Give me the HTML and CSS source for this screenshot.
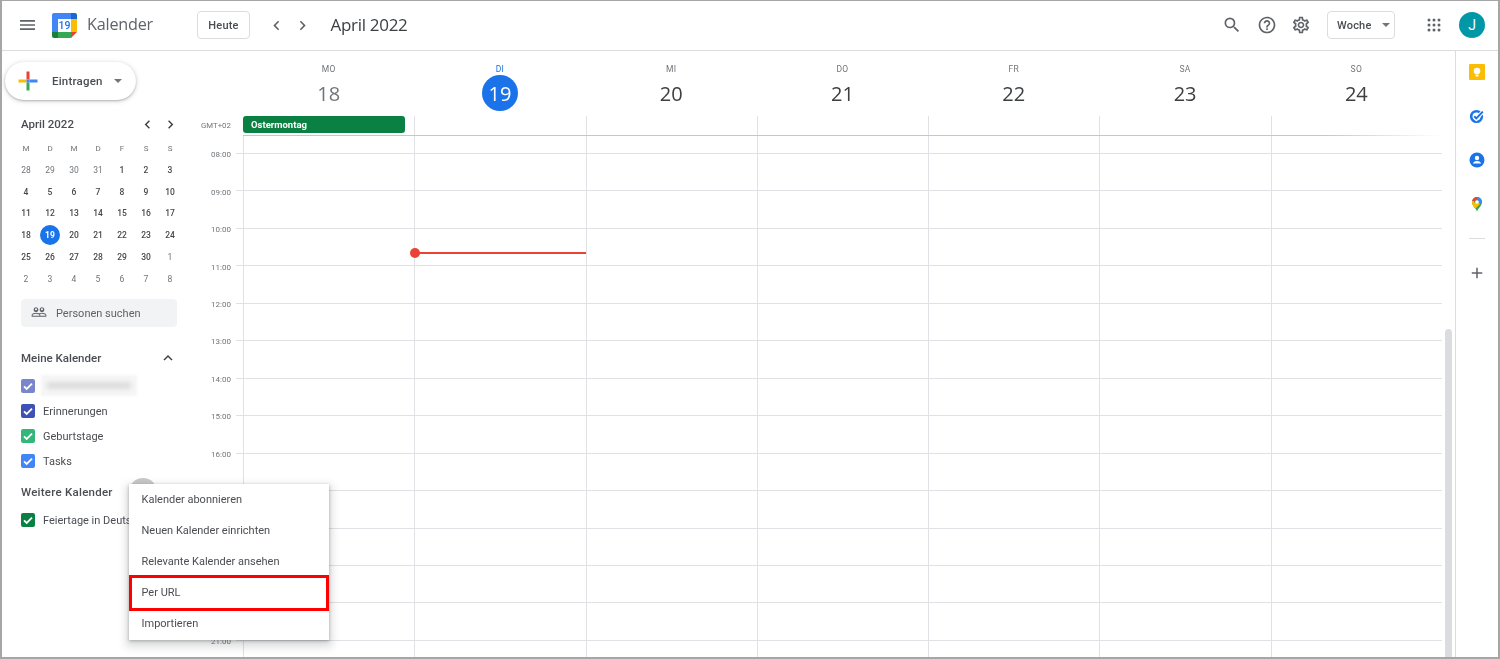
FILE: index.html
```html
<!DOCTYPE html>
<html lang="de">
<head>
<meta charset="utf-8">
<title>Kalender</title>
<link rel="stylesheet" href="styles.css">
</head>
<body>
<div class="frame">
  <header class="topbar">
    <button class="icon-btn menu-btn"><svg viewBox="3 6 18 12" width="15" height="10" preserveAspectRatio="none"><path d="M3 18h18v-2H3v2zm0-5h18v-2H3v2zm0-7v2h18V6H3z"/></svg></button>
    <svg class="logo" viewBox="0 0 25 25" width="25" height="25">
      <path fill="#4285f4" d="M2 0h17v6H6v13H0V2a2 2 0 0 1 2-2z"/>
      <path fill="#fbbc04" d="M19 6h6v13h-6z"/>
      <path fill="#34a853" d="M6 19h13v6H6z"/>
      <path fill="#ea4335" d="M19 19h6l-6 6z"/>
      <path fill="#1967d2" d="M19 0h4a2 2 0 0 1 2 2v4h-6z"/>
      <path fill="#188038" d="M0 19h6v6H2a2 2 0 0 1-2-2z"/>
      <rect x="6" y="6" width="13" height="13" fill="#fff"/>
      <text x="12.5" y="16.4" class="logo-num">19</text>
    </svg>
    <span class="brand">Kalender</span>
    <button class="outline-btn today-btn">Heute</button>
    <button class="icon-btn nav-first"><svg viewBox="0 0 24 24" width="19" height="19"><path d="M15.41 7.41 14 6l-6 6 6 6 1.41-1.41L10.83 12z"/></svg></button>
    <button class="icon-btn nav-next"><svg viewBox="0 0 24 24" width="19" height="19"><path d="M10 6 8.59 7.41 13.17 12l-4.58 4.59L10 18l6-6z"/></svg></button>
    <span class="period">April 2022</span>
    <span class="spacer"></span>
    <button class="icon-btn tool"><svg viewBox="0 0 24 24" width="20" height="20"><path d="M15.5 14h-.79l-.28-.27A6.471 6.471 0 0 0 16 9.5 6.5 6.5 0 1 0 9.5 16c1.61 0 3.09-.59 4.23-1.57l.27.28v.79l5 4.99L20.49 19l-4.99-5zm-6 0C7.01 14 5 11.99 5 9.5S7.01 5 9.5 5 14 7.01 14 9.5 11.99 14 9.5 14z"/></svg></button>
    <button class="icon-btn tool"><svg viewBox="0 0 24 24" width="20" height="20"><path d="M11 18h2v-2h-2v2zm1-16C6.48 2 2 6.48 2 12s4.48 10 10 10 10-4.48 10-10S17.52 2 12 2zm0 18c-4.41 0-8-3.59-8-8s3.59-8 8-8 8 3.59 8 8-3.59 8-8 8zm0-14c-2.21 0-4 1.79-4 4h2c0-1.1.9-2 2-2s2 .9 2 2c0 2-3 1.75-3 5h2c0-2.25 3-2.5 3-5 0-2.21-1.79-4-4-4z"/></svg></button>
    <button class="icon-btn tool"><svg viewBox="0 0 24 24" width="20" height="20"><path d="M19.43 12.98c.04-.32.07-.64.07-.98 0-.34-.03-.66-.07-.98l2.11-1.65c.19-.15.24-.42.12-.64l-2-3.46c-.09-.16-.26-.25-.44-.25-.06 0-.12.01-.17.03l-2.49 1c-.52-.4-1.08-.73-1.69-.98l-.38-2.65C14.46 2.18 14.25 2 14 2h-4c-.25 0-.46.18-.49.42l-.38 2.65c-.61.25-1.17.59-1.69.98l-2.49-1c-.06-.02-.12-.03-.18-.03-.17 0-.34.09-.43.25l-2 3.46c-.13.22-.07.49.12.64l2.11 1.65c-.04.32-.07.65-.07.98 0 .33.03.66.07.98l-2.11 1.65c-.19.15-.24.42-.12.64l2 3.46c.09.16.26.25.44.25.06 0 .12-.01.17-.03l2.49-1c.52.4 1.08.73 1.69.98l.38 2.65c.03.24.24.42.49.42h4c.25 0 .46-.18.49-.42l.38-2.65c.61-.25 1.17-.59 1.69-.98l2.49 1c.06.02.12.03.18.03.17 0 .34-.09.43-.25l2-3.46c.12-.22.07-.49-.12-.64l-2.11-1.65zm-1.98-1.71c.04.31.05.52.05.73 0 .21-.02.43-.05.73l-.14 1.13.89.7 1.08.84-.7 1.21-1.27-.51-1.04-.42-.9.68c-.43.32-.84.56-1.25.73l-1.06.43-.16 1.13-.2 1.35h-1.4l-.19-1.35-.16-1.13-1.06-.43c-.43-.18-.83-.41-1.23-.71l-.91-.7-1.06.43-1.27.51-.7-1.21 1.08-.84.89-.7-.14-1.13c-.03-.31-.05-.54-.05-.74s.02-.43.05-.73l.14-1.13-.89-.7-1.08-.84.7-1.21 1.27.51 1.04.42.9-.68c.43-.32.84-.56 1.25-.73l1.06-.43.16-1.13.2-1.35h1.39l.19 1.35.16 1.13 1.06.43c.43.18.83.41 1.23.71l.91.7 1.06-.43 1.27-.51.7 1.21-1.07.85-.89.7.14 1.13zM12 8c-2.21 0-4 1.79-4 4s1.79 4 4 4 4-1.79 4-4-1.79-4-4-4zm0 6c-1.1 0-2-.9-2-2s.9-2 2-2 2 .9 2 2-.9 2-2 2z"/></svg></button>
    <button class="outline-btn view-btn">Woche<i class="caret"></i></button>
    <button class="icon-btn apps-btn"><svg viewBox="0 0 14 14" width="14" height="14"><g><circle cx="2" cy="2" r="1.5"/><circle cx="7" cy="2" r="1.5"/><circle cx="12" cy="2" r="1.5"/><circle cx="2" cy="7" r="1.5"/><circle cx="7" cy="7" r="1.5"/><circle cx="12" cy="7" r="1.5"/><circle cx="2" cy="12" r="1.5"/><circle cx="7" cy="12" r="1.5"/><circle cx="12" cy="12" r="1.5"/></g></svg></button>
    <span class="avatar">J</span>
  </header>

  <div class="content">
    <aside class="sidebar">
      <button class="create-btn">
        <svg viewBox="0 0 20 20" width="20" height="20">
          <rect x="8.500" y="0.500" width="3" height="8" fill="#ea4335"/>
          <rect x="11.500" y="8.500" width="8" height="3" fill="#4285f4"/>
          <rect x="8.500" y="11.500" width="3" height="8" fill="#34a853"/>
          <rect x="0.500" y="8.500" width="8" height="3" fill="#fbbc04"/>
          <rect x="8.500" y="8.500" width="3" height="3" fill="#4285f4"/>
        </svg>
        <span class="create-label">Eintragen</span>
        <i class="caret"></i>
      </button>

      <div class="mini-head">
        <span class="mini-title">April 2022</span>
        <svg viewBox="0 0 24 24" width="17" height="17"><path d="M15.41 7.41 14 6l-6 6 6 6 1.41-1.41L10.83 12z"/></svg>
        <svg viewBox="0 0 24 24" width="17" height="17"><path d="M10 6 8.59 7.41 13.17 12l-4.58 4.59L10 18l6-6z"/></svg>
      </div>
      <div class="mini-grid">
        <span class="wd">M</span><span class="wd">D</span><span class="wd">M</span><span class="wd">D</span><span class="wd">F</span><span class="wd">S</span><span class="wd">S</span>
        <span class="off">28</span><span class="off">29</span><span class="off">30</span><span class="off">31</span><span>1</span><span>2</span><span>3</span>
        <span>4</span><span>5</span><span>6</span><span>7</span><span>8</span><span>9</span><span>10</span>
        <span>11</span><span>12</span><span>13</span><span>14</span><span>15</span><span>16</span><span>17</span>
        <span>18</span><span class="cur"><b>19</b></span><span>20</span><span>21</span><span>22</span><span>23</span><span>24</span>
        <span>25</span><span>26</span><span>27</span><span>28</span><span>29</span><span>30</span><span class="off">1</span>
        <span class="off">2</span><span class="off">3</span><span class="off">4</span><span class="off">5</span><span class="off">6</span><span class="off">7</span><span class="off">8</span>
      </div>

      <div class="people">
        <svg viewBox="0 0 24 24" width="16" height="16"><path d="M16.5 13c-1.2 0-3.07.34-4.500 1-1.430-.67-3.300-1-4.500-1C5.330 13 1 14.080 1 16.250V19h22v-2.750c0-2.170-4.330-3.250-6.500-3.250zm-4 4.500h-10v-1.250c0-.54 2.560-1.750 5-1.750s5 1.210 5 1.750v1.250zm9 0H14v-1.250c0-.46-.2-.86-.52-1.220.88-.3 1.960-.53 3.020-.53 2.440 0 5 1.210 5 1.750v1.250zM7.500 12c1.930 0 3.500-1.570 3.500-3.500S9.430 5 7.500 5 4 6.570 4 8.500 5.570 12 7.500 12zm0-5.500c.83 0 1.500.67 1.500 1.500s-.67 1.500-1.500 1.500S6 8.830 6 8s.67-1.500 1.500-1.500zm9 5.500c1.930 0 3.500-1.570 3.500-3.500S18.430 5 16.500 5 13 6.570 13 8.500s1.570 3.500 3.500 3.500zm0-5.500c.83 0 1.500.67 1.500 1.500s-.67 1.500-1.500 1.500S15 8.830 15 8s.67-1.500 1.500-1.500z"/></svg>
        <span>Personen suchen</span>
      </div>

      <div class="sec-head sec-mine">
        <span>Meine Kalender</span>
        <svg viewBox="0 0 24 24" width="18" height="18"><path d="M12 8l-6 6 1.410 1.410L12 10.830l4.590 4.580L18 14z"/></svg>
      </div>
      <ul class="cal-list">
        <li><span class="check c-lav"><svg viewBox="0 0 14 14"><path d="M3 7.300l2.700 2.700L11 4.700"/></svg></span><span class="blurred"><i></i></span></li>
        <li><span class="check c-ind"><svg viewBox="0 0 14 14"><path d="M3 7.300l2.700 2.700L11 4.700"/></svg></span>Erinnerungen</li>
        <li><span class="check c-grn"><svg viewBox="0 0 14 14"><path d="M3 7.300l2.700 2.700L11 4.700"/></svg></span>Geburtstage</li>
        <li><span class="check c-blu"><svg viewBox="0 0 14 14"><path d="M3 7.300l2.700 2.700L11 4.700"/></svg></span>Tasks</li>
      </ul>
      <div class="sec-head sec-more">
        <span>Weitere Kalender</span>
        <i class="hover-dot"></i>
      </div>
      <ul class="cal-list">
        <li class="nowrap"><span class="check c-bas"><svg viewBox="0 0 14 14"><path d="M3 7.300l2.700 2.700L11 4.700"/></svg></span>Feiertage in Deutschland</li>
      </ul>
    </aside>

    <main class="calendar">
      <div class="day-row">
        <div class="day"><span class="day-name">MO</span><span class="day-num past">18</span></div>
        <div class="day today"><span class="day-name">DI</span><span class="day-num">19</span></div>
        <div class="day"><span class="day-name">MI</span><span class="day-num">20</span></div>
        <div class="day"><span class="day-name">DO</span><span class="day-num">21</span></div>
        <div class="day"><span class="day-name">FR</span><span class="day-num">22</span></div>
        <div class="day"><span class="day-name">SA</span><span class="day-num">23</span></div>
        <div class="day"><span class="day-name">SO</span><span class="day-num">24</span></div>
      </div>
      <div class="allday">
        <span class="tz">GMT+02</span>
        <div class="allday-cols">
          <div class="allday-col"><span class="chip">Ostermontag</span></div>
          <div class="allday-col"></div><div class="allday-col"></div><div class="allday-col"></div><div class="allday-col"></div><div class="allday-col"></div><div class="allday-col"></div>
        </div>
      </div>
      <div class="grid">
        <div class="gutter">
          <span>08:00</span><span>09:00</span><span>10:00</span><span>11:00</span><span>12:00</span><span>13:00</span><span>14:00</span><span>15:00</span><span>16:00</span><span></span><span></span><span></span><span></span><span>21:00</span>
        </div>
        <div class="cols">
          <div class="col"></div>
          <div class="col"><div class="now"></div></div>
          <div class="col"></div><div class="col"></div><div class="col"></div><div class="col"></div><div class="col"></div>
        </div>
        <div class="scrollbar"></div>
      </div>
    </main>

    <aside class="addons">
      <svg viewBox="0 0 16 16" width="16" height="16" class="addon"><rect width="16" height="16" rx="1" fill="#fbbc04"/><circle cx="8" cy="7" r="3.300" fill="#fff"/><rect x="6.500" y="10.500" width="3" height="2" fill="#fff"/></svg>
      <svg viewBox="0 0 16 16" width="16" height="16" class="addon"><circle cx="7.500" cy="8.500" r="5.300" fill="none" stroke="#1a73e8" stroke-width="2.600"/><path d="M5 8.300l2.300 2.300L14 3.500" fill="none" stroke="#fff" stroke-width="4"/><path d="M5.200 8.300l2.100 2.100L13.800 3.600" fill="none" stroke="#1a73e8" stroke-width="2"/></svg>
      <svg viewBox="0 0 16 16" width="16" height="16" class="addon"><circle cx="8" cy="8" r="7.500" fill="#1a73e8"/><circle cx="8" cy="6" r="2.200" fill="#fff"/><path d="M3.800 11.500c.6-1.700 2.500-2.500 4.200-2.500s3.600.8 4.200 2.500z" fill="#fff"/></svg>
      <svg viewBox="0 0 16 16" width="16" height="16" class="addon">
        <clipPath id="pin"><path d="M8 15.500C7.300 12.500 3 10 3 6A5 5 0 0 1 13 6C13 10 8.700 12.500 8 15.500Z"/></clipPath>
        <g clip-path="url(#pin)">
          <rect x="2" y="0" width="12" height="16" fill="#34a853"/>
          <path d="M2 0h8L3 8H2z" fill="#ea4335"/>
          <path d="M10 0h4v6l-3 2-3-3z" fill="#4285f4"/>
          <path d="M3 8l5-3 3 3-5 5z" fill="#fbbc04"/>
          <path d="M2 5h3v5l-3 0z" fill="#fbbc04"/>
        </g>
        <circle cx="8" cy="6" r="1.800" fill="#fff"/>
      </svg>
      <i class="addon-sep"></i>
      <svg viewBox="0 0 24 24" width="18" height="18" class="addon-plus"><path d="M19 13h-6v6h-2v-6H5v-2h6V5h2v6h6v2z"/></svg>
    </aside>
  </div>

  <div class="popup">
    <div class="popup-item">Kalender abonnieren</div>
    <div class="popup-item">Neuen Kalender einrichten</div>
    <div class="popup-item">Relevante Kalender ansehen</div>
    <div class="popup-item">Per URL</div>
    <div class="popup-item">Importieren</div>
    <div class="highlight"></div>
  </div>
</div>
</body>
</html>
```

FILE: styles.css
```css
* { box-sizing: border-box; }
html, body { margin: 0; padding: 0; background: #fff; }
body { font-family: Roboto, "Liberation Sans", sans-serif; color: #3c4043; overflow: hidden; }
button { font: inherit; color: inherit; background: none; border: 0; padding: 0; }
ul { list-style: none; margin: 0; padding: 0; }
svg { display: block; fill: #5f6368; flex: none; }

.frame { position: relative; width: 1500px; height: 659px; border: solid #a6a6a6; border-width: 1px 2px 2px 2px; display: flex; flex-direction: column; overflow: hidden; filter: blur(.3px); }

/* top bar */
.topbar { height: 50px; flex: none; display: flex; align-items: center; padding-bottom: 1px; border-bottom: 1px solid #dadce0; }
.icon-btn { display: flex; align-items: center; justify-content: center; }
.menu-btn { margin-left: 18px; width: 15px; }
.menu-btn svg { fill: #5f6368; }
.logo { margin-left: 17px; }
.logo-num { font: 500 10.5px Roboto, sans-serif; fill: #1a73e8; text-anchor: middle; }
.brand { margin: 0 0 2px 10px; font-size: 16.200px; color: #5f6368; font-family: "Open Sans", Roboto, sans-serif; letter-spacing: -0.2px; }
.outline-btn { height: 28px; border: 1px solid #dadce0; border-radius: 4px; font-size: 11px; font-weight: 500; letter-spacing: .2px; color: #4a4d52; }
.today-btn { margin-left: 44px; width: 53px; }
.nav-first { margin-left: 17px; width: 19px; }
.nav-next { margin-left: 7px; width: 19px; }
.period { margin: 0 0 2px 18.500px; font-size: 17px; font-family: "Open Sans", Roboto, sans-serif; letter-spacing: -0.3px; color: #3c4043; }
.spacer { flex: 1; }
.tool { width: 20px; margin-right: 14.500px; }
.view-btn { width: 68px; margin-left: 1.500px; display: flex; align-items: center; padding-left: 9px; }
.caret { width: 0; height: 0; border: 4px solid transparent; border-top: 4.500px solid #70757a; border-bottom: 0; display: block; }
.view-btn .caret { margin-left: 10px; }
.apps-btn { margin-left: 32px; width: 14px; }
.avatar { margin-left: 18px; margin-right: 13px; width: 26px; height: 26px; border-radius: 50%; background: #0097a7; color: #fff; font-size: 14px; font-weight: 400; display: flex; align-items: center; justify-content: center; }

/* body */
.content { flex: 1; min-height: 0; display: flex; }
.sidebar { width: 195px; flex: none; }
.create-btn { margin: 11px 0 0 3px; width: 131px; height: 38px; border-radius: 19px; background: #fff; box-shadow: 0 1px 2px rgba(60,64,67,.3), 0 1px 4px 1px rgba(60,64,67,.15); display: flex; align-items: center; padding: 0 0 1px 12.500px; }
.create-label { margin-left: 14.500px; font-size: 11.500px; font-weight: 500; letter-spacing: .2px; color: #4a4d52; }
.create-btn .caret { margin-left: 11px; }

.mini-head { margin: 12px 0 0 19px; height: 24px; width: 158px; display: flex; align-items: center; }
.mini-head svg { fill: #3c4043; }
.mini-head svg + svg { margin-left: 6px; }
.mini-title { flex: 1; font-size: 11.500px; font-weight: 500; color: #4a4d52; }
.mini-grid { margin: 1px 0 0 12px; display: grid; grid-template-columns: repeat(7, 24px); grid-auto-rows: 21.830px; font-size: 8.500px; font-weight: 500; color: #45484c; }
.mini-grid span { display: flex; align-items: center; justify-content: center; }
.mini-grid .wd { color: #70757a; font-size: 8px; font-weight: 400; padding-top: 1px; }
.mini-grid .off { color: #70757a; font-weight: 400; }
.mini-grid .cur b { width: 20px; height: 20px; border-radius: 50%; background: #1a73e8; color: #fff; display: flex; align-items: center; justify-content: center; font-weight: 700; }

.people { margin: 9px 0 0 19px; width: 156px; height: 28px; border-radius: 4px; background: #f1f3f4; display: flex; align-items: center; padding: 1px 0 0 10px; font-size: 11px; color: #5f6368; }
.people svg { margin-top: -3px; }
.people span { margin-left: 9px; }

.sec-head { margin-left: 19px; height: 20px; display: flex; align-items: center; font-size: 11.500px; font-weight: 500; color: #4a4d52; }
.sec-mine { margin-top: 21px; width: 156px; justify-content: space-between; }
.sec-mine svg { fill: #3c4043; }
.sec-more { margin-top: 8.500px; width: 136px; justify-content: space-between; letter-spacing: .25px; }
.hover-dot { width: 28px; height: 28px; border-radius: 50%; background: #c8c9cb; flex: none; }
.cal-list { margin-top: 5.500px; }
.cal-list li { margin-left: 19px; height: 25px; display: flex; align-items: center; padding-top: 1px; font-size: 11px; color: #4a4d52; }
.cal-list .nowrap { white-space: nowrap; }
.check { width: 14px; height: 14px; border-radius: 2px; margin: -1px 8px 0 0; flex: none; }
.check svg { width: 14px; height: 14px; fill: none; stroke: #fff; stroke-width: 1.800; }
.c-lav { background: #7986cb; }
.c-ind { background: #3f51b5; }
.c-grn { background: #33b679; }
.c-blu { background: #4285f4; }
.c-bas { background: #0b8043; }
.blurred { width: 96px; height: 21px; margin: -1px 0 0 -2px; background: #f6f6f6; filter: blur(1px); display: flex; align-items: center; justify-content: center; }
.blurred i { display: block; width: 84px; height: 7px; background: #dcdcdc; filter: blur(2px); }

/* calendar */
.calendar { flex: 1; min-width: 0; display: flex; flex-direction: column; position: relative; }
.day-row { height: 65px; flex: none; margin-left: 46px; width: 1199px; display: grid; grid-template-columns: repeat(7, 1fr); padding-top: 12px; }
.day { display: flex; flex-direction: column; align-items: center; }
.day-name { height: 12px; line-height: 12px; font-size: 8.500px; font-weight: 400; color: #70757a; letter-spacing: .3px; }
.day-num { width: 36px; height: 36px; border-radius: 50%; display: flex; align-items: center; justify-content: center; font-family: "Open Sans", Roboto, sans-serif; font-size: 20px; color: #3c4043; }
.day-num.past { color: #70757a; }
.today .day-name { color: #1a73e8; }
.today .day-num { background: #1a73e8; color: #fff; }

.allday { height: 20px; flex: none; display: flex; width: 1245px; }
.tz { width: 46px; padding: 5px 0 0 4px; font-size: 7.800px; color: #70757a; white-space: nowrap; text-align: left; }
.allday-cols { flex: 1; display: grid; grid-template-columns: repeat(7, 1fr); border-bottom: 1px solid; border-image: linear-gradient(90deg, #c6c6c6 90%, #fff 100%) 1; }
.allday-col { border-left: 1px solid #dfe1e5; padding-right: 9px; }
.allday-col:first-child { border-left: 0; }
.chip { display: block; height: 17px; line-height: 17px; border-radius: 3px; background: #0b8043; color: #fff; font-size: 9.500px; font-weight: 700; padding-left: 8px; }

.grid { flex: 1; min-height: 0; display: flex; position: relative; overflow: hidden; }
.gutter { width: 46px; flex: none; display: flex; flex-direction: column; align-items: flex-start; padding: 0 0 0 14px; font-size: 8px; color: #70757a; background-image: repeating-linear-gradient(180deg, transparent 0, transparent 17px, #dfe1e5 17px, #dfe1e5 18px, transparent 18px, transparent 37.450px); background-size: 7px 100%; background-position: 39px 0; background-repeat: no-repeat; }
.gutter span { height: 37.450px; flex: none; display: flex; align-items: center; }
.cols { width: 1199px; flex: none; display: grid; grid-template-columns: repeat(7, 1fr); background-image: repeating-linear-gradient(180deg, transparent 0, transparent 17px, #dfe1e5 17px, #dfe1e5 18px, transparent 18px, transparent 37.450px); }
.col { border-left: 1px solid #dfe1e5; position: relative; }
.now { position: absolute; left: 0; right: 0; top: 116px; height: 1.500px; background: #ea4335; }
.now::before { content: ""; position: absolute; left: -5px; top: -4px; width: 10px; height: 10px; border-radius: 50%; background: #ea4335; }
.scrollbar { position: absolute; left: 1248px; top: 193px; bottom: -5px; width: 7px; border-radius: 4px 4px 0 0; background: #dadce0; }

/* add-ons */
.addons { width: 43px; flex: none; border-left: 1px solid #dadce0; display: flex; flex-direction: column; align-items: center; padding-top: 13px; }
.addon { margin-bottom: 28px; }
.addon-sep { width: 16px; height: 1px; background: #dadce0; margin-top: -2px; }
.addon-plus { margin-top: 25px; fill: #5f6368; }

/* popup */
.popup { position: absolute; left: 127px; top: 482.500px; width: 200px; height: 156px; background: #fff; box-shadow: 0 4px 8px 3px rgba(60,64,67,.18), 0 1px 3px rgba(60,64,67,.35); }
.popup-item { height: 31.200px; display: flex; align-items: center; padding-left: 12.500px; font-size: 11px; color: #4a4d52; }
.highlight { position: absolute; left: 0; right: 0; top: 91.500px; height: 36px; border: 3px solid #f00; }
```
